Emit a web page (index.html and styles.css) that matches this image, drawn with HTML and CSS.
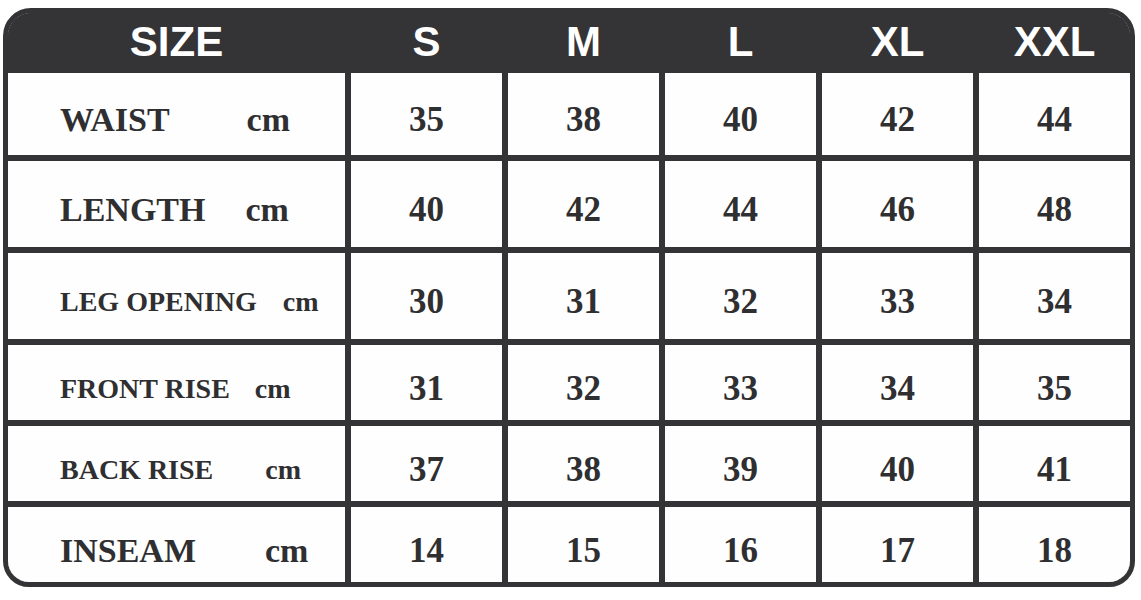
FILE: index.html
```html
<!DOCTYPE html>
<html lang="en">
<head>
<meta charset="utf-8">
<title>Size chart</title>
<link rel="stylesheet" href="styles.css">
</head>
<body>
<div class="chart">
  <div class="grid">
    <div class="head">SIZE</div>
    <div class="head">S</div>
    <div class="head">M</div>
    <div class="head">L</div>
    <div class="head">XL</div>
    <div class="head">XXL</div>

    <div class="label lg"><span>WAIST</span><span class="cm cm-waist">cm</span></div>
    <div class="val">35</div><div class="val">38</div><div class="val">40</div><div class="val">42</div><div class="val">44</div>

    <div class="label lg"><span>LENGTH</span><span class="cm cm-length">cm</span></div>
    <div class="val">40</div><div class="val">42</div><div class="val">44</div><div class="val">46</div><div class="val">48</div>

    <div class="label sm"><span>LEG OPENING</span><span class="cm cm-leg">cm</span></div>
    <div class="val">30</div><div class="val">31</div><div class="val">32</div><div class="val">33</div><div class="val">34</div>

    <div class="label sm"><span>FRONT RISE</span><span class="cm cm-front">cm</span></div>
    <div class="val">31</div><div class="val">32</div><div class="val">33</div><div class="val">34</div><div class="val">35</div>

    <div class="label sm"><span>BACK RISE</span><span class="cm cm-back">cm</span></div>
    <div class="val">37</div><div class="val">38</div><div class="val">39</div><div class="val">40</div><div class="val">41</div>

    <div class="label lg"><span>INSEAM</span><span class="cm cm-inseam">cm</span></div>
    <div class="val">14</div><div class="val">15</div><div class="val">16</div><div class="val">17</div><div class="val">18</div>
  </div>
</div>
</body>
</html>
```

FILE: styles.css
```css
html, body {
  margin: 0;
  padding: 0;
  background: #ffffff;
}

body {
  padding: 8px 0 0 3px;
}

.chart {
  width: 1132px;
  height: 579px;
  box-sizing: border-box;
  border: 5px solid #343437;
  border-radius: 28px 28px 26px 26px;
  overflow: hidden;
  background: #343437;
}

.grid {
  display: grid;
  grid-template-columns: 337px repeat(5, 151px);
  grid-template-rows: 54px 82px 86px 86px 75px 75px 75px;
  column-gap: 6px;
  row-gap: 6px;
  background: #343437;
  height: 100%;
}

.head {
  background: #343437;
  color: #ffffff;
  font-family: "Liberation Sans", Arial, sans-serif;
  font-weight: bold;
  font-size: 42px;
  display: flex;
  align-items: center;
  justify-content: center;
  padding-top: 4px;
  box-sizing: border-box;
}

.label,
.val {
  background: #fefefe;
  color: #2f2f31;
  font-family: "Liberation Serif", "Times New Roman", serif;
  font-weight: bold;
  display: flex;
  align-items: center;
  padding-top: 12px;
  box-sizing: border-box;
}

.val {
  justify-content: center;
  font-size: 35px;
}

.label {
  padding-left: 52px;
}

.label.lg {
  font-size: 34px;
}

.label.sm {
  font-size: 28px;
}

.cm-waist { margin-left: 77px; }
.cm-length { margin-left: 40px; }
.cm-leg { margin-left: 26px; }
.cm-front { margin-left: 25px; }
.cm-back { margin-left: 52px; }
.cm-inseam { margin-left: 69px; }
```
